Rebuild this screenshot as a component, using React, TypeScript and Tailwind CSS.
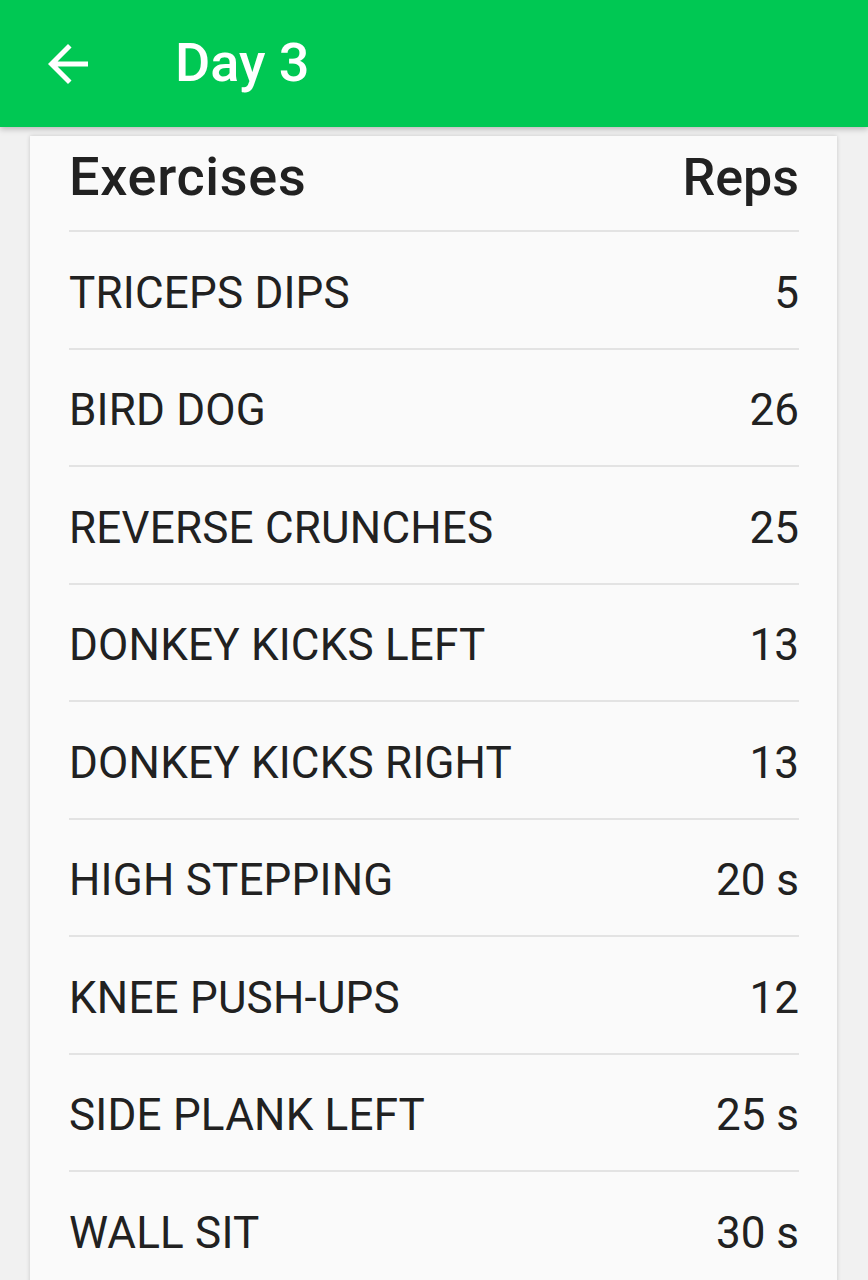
const rows: [string, string][] = [
  ["TRICEPS DIPS", "5"],
  ["BIRD DOG", "26"],
  ["REVERSE CRUNCHES", "25"],
  ["DONKEY KICKS LEFT", "13"],
  ["DONKEY KICKS RIGHT", "13"],
  ["HIGH STEPPING", "20 s"],
  ["KNEE PUSH-UPS", "12"],
  ["SIDE PLANK LEFT", "25 s"],
  ["WALL SIT", "30 s"],
];

export default function App() {
  return (
    <div className="flex flex-col h-[1280px] overflow-hidden bg-[#f1f1f1] font-['Roboto',sans-serif] text-[#212121]">
      {/* App bar */}
      <header className="relative z-10 flex items-center h-[127px] shrink-0 bg-[#00c853] text-white shadow-[0_2px_6px_rgba(0,0,0,0.25)]">
        <svg className="ml-[38px] w-[60px] h-[60px]" viewBox="0 0 24 24" fill="currentColor">
          <path d="M20 11H7.83l5.59-5.59L12 4l-8 8 8 8 1.41-1.41L7.83 13H20v-2z" />
        </svg>
        <h1 className="ml-[77px] text-[54px] font-medium leading-none -mt-[2px]">Day 3</h1>
      </header>

      {/* Card */}
      <main className="flex-1 pt-[9px]">
        <div className="ml-[30px] w-[807px] h-full bg-[#fafafa] shadow-[0_0_4px_rgba(0,0,0,0.18)] pl-[39px] pr-[38px]">
          <div className="flex justify-between items-baseline h-[96px] pt-[14px] border-b-2 border-[#e3e3e3] text-[54px] font-medium leading-none">
            <span className="tracking-[0.7px]">Exercises</span>
            <span className="text-[52px]">Reps</span>
          </div>
          {rows.map(([name, reps]) => (
            <div
              key={name}
              className="flex justify-between items-center h-[117.5px] pt-[6px] border-b-2 border-[#e3e3e3] text-[44px] leading-none"
            >
              <span className="tracking-[0.2px]">{name}</span>
              <span>{reps}</span>
            </div>
          ))}
        </div>
      </main>
    </div>
  );
}
